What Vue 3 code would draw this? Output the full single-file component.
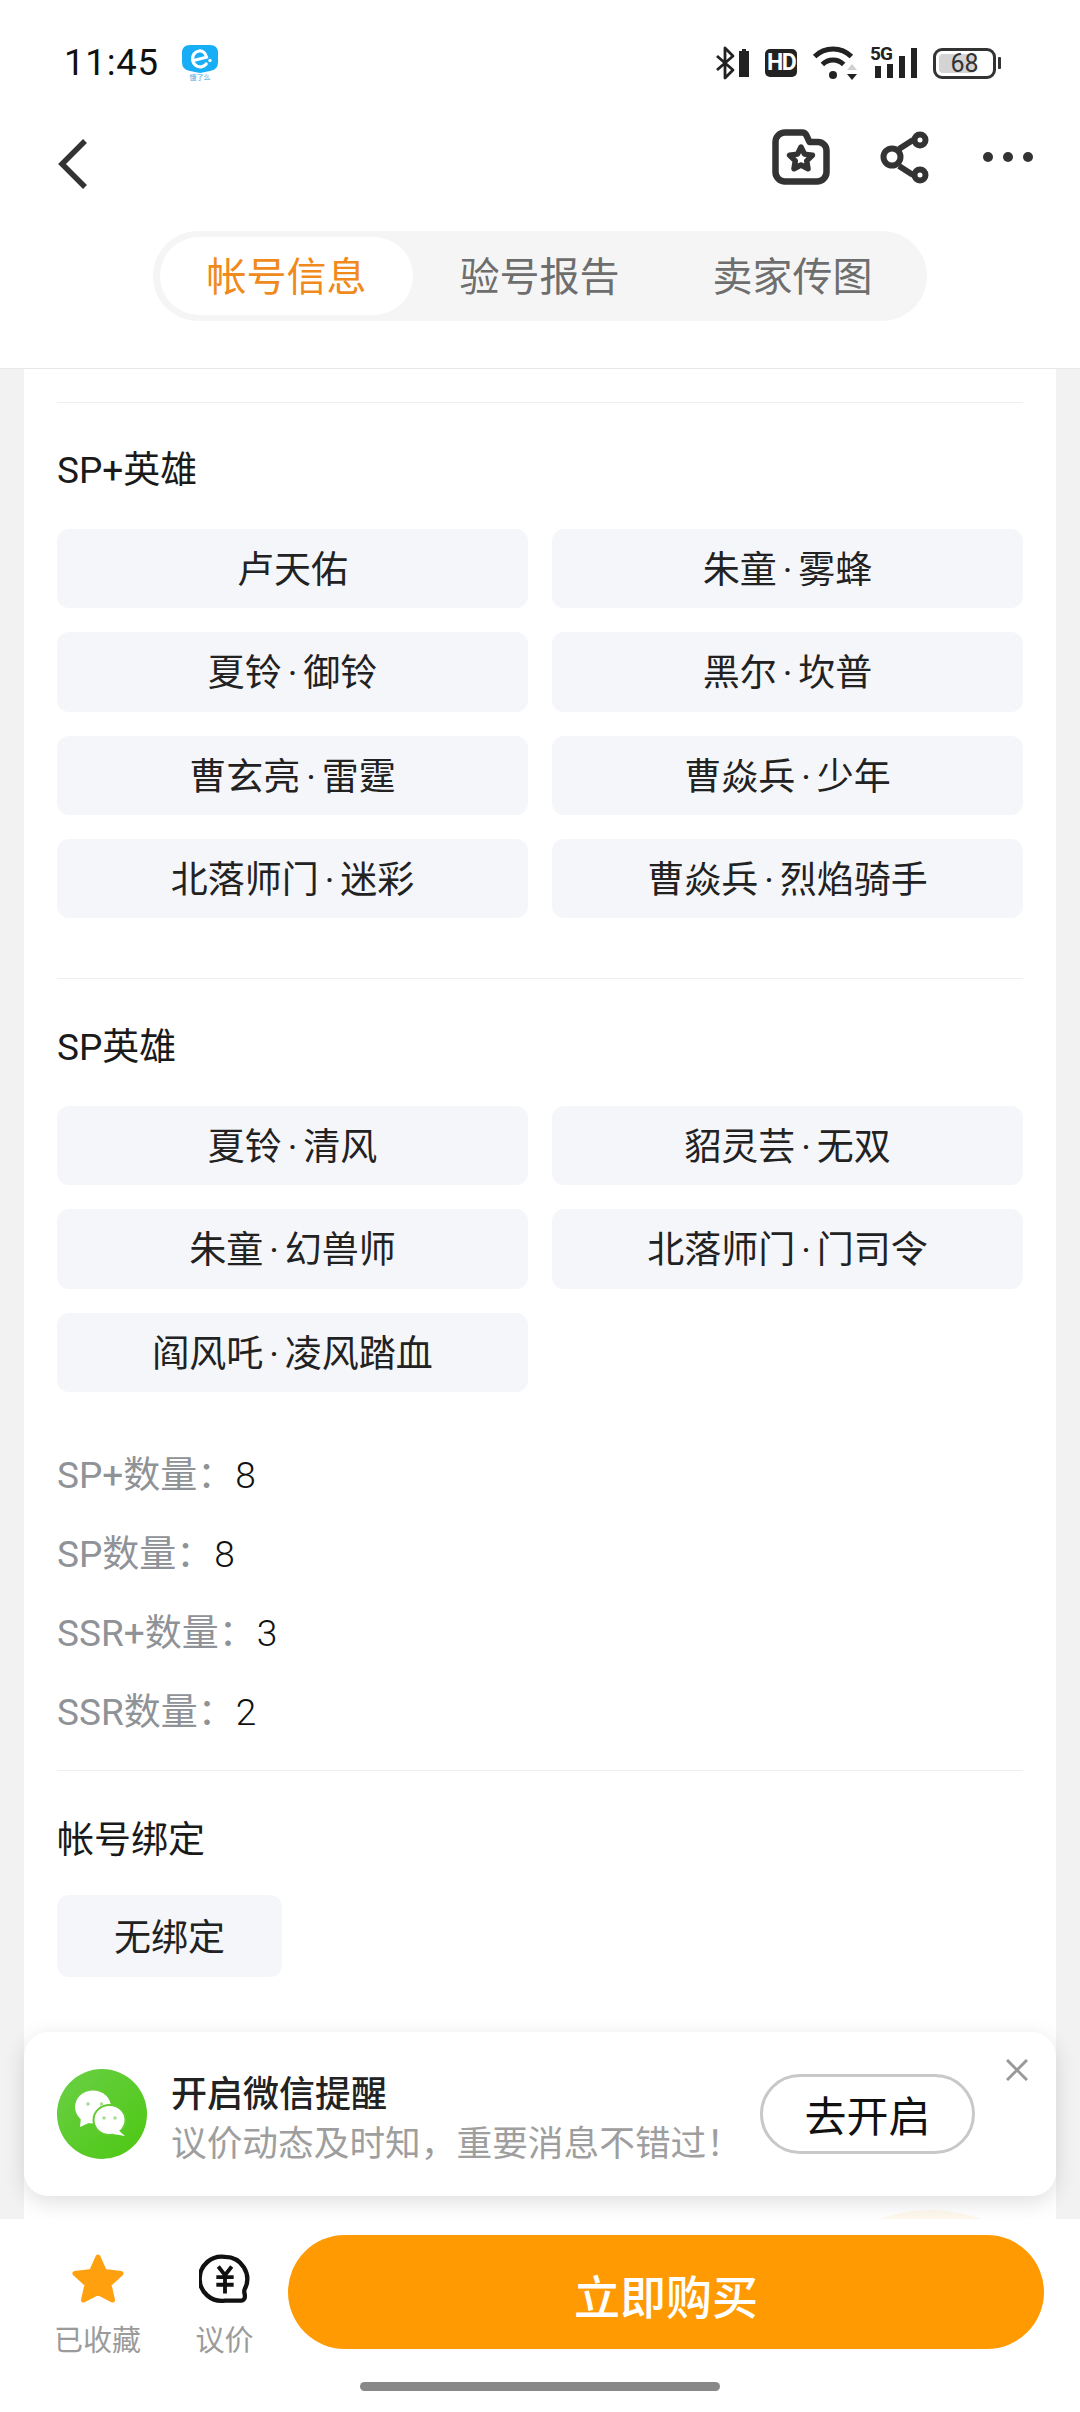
<script setup>
const tabs = ['帐号信息', '验号报告', '卖家传图']
const spPlus = ['卢天佑', '朱童·雾蜂', '夏铃·御铃', '黑尔·坎普', '曹玄亮·雷霆', '曹焱兵·少年', '北落师门·迷彩', '曹焱兵·烈焰骑手']
const sp = ['夏铃·清风', '貂灵芸·无双', '朱童·幻兽师', '北落师门·门司令', '阎风吒·凌风踏血']
const stats = [['SP+数量：', 8], ['SP数量：', 8], ['SSR+数量：', 3], ['SSR数量：', 2]]
</script>

<template>
  <div class="page">
    <header class="top">
      <div class="status">
        <div class="status-left">
          <span class="time">11:45</span>
          <div class="app">
            <svg class="app-logo" width="36" height="28" viewBox="0 0 36 28">
              <path d="M8 0H28Q36 0 36 8V17Q36 25 28 26L18 28L8 26Q0 25 0 17V8Q0 0 8 0Z" fill="#18aef6" />
              <path d="M11.500 15.500L24.500 12.200C23.500 8 20.500 5.500 17 6C12.800 6.600 10 10.500 10.600 15C11.200 19.500 15 22.500 19.500 21.800C21.500 21.500 23 20.500 24.200 19" fill="none" stroke="#fff" stroke-width="3.200" stroke-linecap="round" />
              <circle cx="28" cy="15.500" r="1.700" fill="#fff" />
            </svg>
            <span class="app-name">饿了么</span>
          </div>
        </div>
        <div class="status-right">
          <svg class="bt" width="36" height="34" viewBox="0 0 36 34">
            <path d="M2 10L18 24L10 32V2L18 10L2 24" fill="none" stroke="#222" stroke-width="2.800" stroke-linejoin="round" />
            <path d="M24 5H34V31H24Z" fill="#222" />
            <path d="M27 3H31V5H27Z" fill="#222" />
          </svg>
          <span class="hd">HD</span>
          <svg class="wifi" width="45" height="36" viewBox="0 0 45 36">
            <path d="M1.600 11.600A26 26 0 0 1 38.400 11.600M9.400 19.400A15 15 0 0 1 30.600 19.400" fill="none" stroke="#222" stroke-width="5" />
            <circle cx="20" cy="30" r="4" fill="#222" />
            <path d="M39 19L44 25H34Z" fill="#d0d0d0" />
            <path d="M34 29H44L39 35Z" fill="#222" />
          </svg>
          <div class="signal">
            <span class="five">5G</span>
            <svg width="46" height="32" viewBox="0 0 46 32">
              <path d="M4 19H10V31H4ZM16 17H22V31H16ZM28 9H34V31H28ZM40 1H46V31H40Z" fill="#222" />
            </svg>
          </div>
          <div class="battery">
            <div class="battery-body">
              <div class="battery-fill"></div>
              <span class="battery-num">68</span>
            </div>
            <div class="battery-tip"></div>
          </div>
        </div>
      </div>

      <nav class="nav">
        <svg class="back" width="32" height="52" viewBox="0 0 32 52">
          <path d="M27 3L4 26L27 49" fill="none" stroke="#333" stroke-width="5.500" />
        </svg>
        <div class="nav-actions">
          <svg width="58" height="56" viewBox="0 0 58 56">
            <path d="M3.500 13a9.500 9.500 0 0 1 9.500-9.500H30a5 5 0 0 1 4.500 3L37.500 13H46a8.500 8.500 0 0 1 8.500 8.500V43a9.500 9.500 0 0 1-9.500 9.500H13A9.500 9.500 0 0 1 3.500 43Z" fill="none" stroke="#333" stroke-width="6.500" stroke-linejoin="round" />
            <path d="M29 18L32.500 25.100L40.400 26.300L34.700 31.900L36 39.700L29 36L22 39.700L23.300 31.900L17.600 26.300L25.500 25.100Z" fill="#fff" stroke="#333" stroke-width="5.500" stroke-linejoin="round" />
          </svg>
          <svg class="share" width="52" height="54" viewBox="0 0 52 54">
            <path d="M19 18L33 9M19 35L33 44" stroke="#333" stroke-width="6" />
            <circle cx="12" cy="26" r="8.500" fill="none" stroke="#333" stroke-width="6" />
            <circle cx="40" cy="9" r="5.500" fill="none" stroke="#333" stroke-width="6" />
            <circle cx="40" cy="44" r="5.500" fill="none" stroke="#333" stroke-width="6" />
          </svg>
          <div class="dots"><i></i><i></i><i></i></div>
        </div>
      </nav>

      <div class="tabs">
        <div v-for="(tab, i) in tabs" :key="tab" class="tab" :class="{ active: i === 0 }">{{ tab }}</div>
      </div>
    </header>

    <main class="main">
      <section class="card">
        <div class="group first">
          <h2 class="title">SP+英雄</h2>
          <div class="chips">
            <div v-for="name in spPlus" :key="name" class="chip">
              <template v-for="(part, i) in name.split('·')" :key="part"><span v-if="i" class="dot">·</span>{{ part }}</template>
            </div>
          </div>
        </div>
        <div class="group second">
          <h2 class="title">SP英雄</h2>
          <div class="chips">
            <div v-for="name in sp" :key="name" class="chip">
              <template v-for="(part, i) in name.split('·')" :key="part"><span v-if="i" class="dot">·</span>{{ part }}</template>
            </div>
          </div>
          <div class="stats">
            <div v-for="row in stats" :key="row[0]" class="stat">
              <span class="stat-label">{{ row[0] }}</span><span class="stat-value">{{ row[1] }}</span>
            </div>
          </div>
        </div>
        <div class="group bind">
          <h2 class="title">帐号绑定</h2>
          <div class="chip small">无绑定</div>
        </div>
      </section>

      <div class="glow"></div>

      <aside class="notice">
        <svg class="wx" width="90" height="90" viewBox="0 0 90 90">
          <defs>
            <linearGradient id="wxg" x1="0" y1="0" x2="1" y2="1">
              <stop offset="0" stop-color="#6ad046" />
              <stop offset="1" stop-color="#4dc712" />
            </linearGradient>
          </defs>
          <circle cx="45" cy="45" r="45" fill="url(#wxg)" />
          <ellipse cx="36" cy="38" rx="18" ry="16.500" fill="#fff" />
          <path d="M24 48L23 58L34 53Z" fill="#fff" />
          <ellipse cx="52.500" cy="51" rx="16" ry="15" fill="#fff" stroke="#5fcc30" stroke-width="2" />
          <path d="M60 60L68 67L56 65Z" fill="#fff" />
          <circle cx="31" cy="35" r="1.800" fill="#a8dc94" />
          <circle cx="44.500" cy="35" r="1.800" fill="#a8dc94" />
          <circle cx="47" cy="49" r="1.800" fill="#a8dc94" />
          <circle cx="58" cy="49" r="1.800" fill="#a8dc94" />
        </svg>
        <div class="notice-text">
          <div class="notice-title">开启微信提醒</div>
          <div class="notice-sub">议价动态及时知，重要消息不错过！</div>
        </div>
        <div class="notice-btn">去开启</div>
        <svg class="close" width="22" height="22" viewBox="0 0 22 22">
          <path d="M1 1L21 21M21 1L1 21" stroke="#999" stroke-width="3" />
        </svg>
      </aside>
    </main>

    <footer class="bottom">
      <div class="actions">
        <div class="action">
          <svg width="52" height="50" viewBox="0 0 52 50">
            <path d="M26 3L32.500 17.500L49 19.500L37 30.500L40.500 46L26 38.500L11.500 46L15 30.500L3 19.500L19.500 17.500Z" fill="#ffa00f" stroke="#ffa00f" stroke-width="5" stroke-linejoin="round" />
          </svg>
          <span class="action-label">已收藏</span>
        </div>
        <div class="action">
          <svg width="52" height="50" viewBox="0 0 52 52">
            <path d="M26 3A23 23 0 0 1 46.500 36.500Q45.500 38 46.500 42Q47.500 48 43 48.500H26A23 23 0 1 1 26 3Z" fill="none" stroke="#111" stroke-width="4.500" stroke-linejoin="round" />
            <path d="M19 13L26 22L33 13M17 24H35M17 32H35M26 22V41" fill="none" stroke="#111" stroke-width="4" />
          </svg>
          <span class="action-label">议价</span>
        </div>
        <div class="buy">立即购买</div>
      </div>
      <div class="home"></div>
    </footer>
  </div>
</template>

<style scoped>
.page {
  width: 1080px;
  height: 2412px;
  display: flex;
  flex-direction: column;
  overflow: hidden;
  background: #fff;
  font-family: "Noto Sans CJK SC", "Noto Sans", sans-serif;
  color: #222;
}
.top {
  height: 369px;
  box-sizing: border-box;
  border-bottom: 1px solid #e8e8e8;
  flex: none;
}
.status {
  height: 126px;
  padding: 0 79px 0 64px;
  box-sizing: border-box;
  display: flex;
  justify-content: space-between;
  align-items: center;
}
.status-left { display: flex; align-items: center; gap: 23px; }
.time { font: 400 36.500px/1 Roboto, sans-serif; color: #111; letter-spacing: 0.800px; }
.app { width: 36px; height: 36px; display: flex; flex-direction: column; align-items: center; }
.app-logo { display: block; flex: none; }
.app-name { font-size: 7px; line-height: 8px; color: #3aa6e0; white-space: nowrap; }
.status-right { display: flex; align-items: center; }
.bt { display: block; margin-right: 14px; }
.hd {
  width: 32px;
  height: 28px;
  margin-right: 16px;
  background: #222;
  border-radius: 5px;
  color: #fff;
  font: 700 23px/28px Roboto, sans-serif;
  letter-spacing: -1.500px;
  text-align: center;
}
.wifi { display: block; margin-right: 13px; }
.signal { position: relative; width: 46px; height: 32px; margin-right: 16px; }
.signal svg { display: block; }
.five {
  position: absolute;
  left: -1px;
  top: -1px;
  font: 700 19px/16px Roboto, sans-serif;
  letter-spacing: -0.800px;
  color: #222;
}
.battery { display: flex; align-items: center; gap: 2px; }
.battery-body {
  position: relative;
  width: 63px;
  height: 31px;
  box-sizing: border-box;
  border: 3px solid #333;
  border-radius: 9px;
  display: flex;
  align-items: center;
  justify-content: center;
}
.battery-fill { position: absolute; left: 3px; top: 3px; bottom: 3px; width: 36px; background: #d4d4d4; border-radius: 4px; }
.battery-num { position: relative; font: 400 25px/1 Roboto, sans-serif; color: #333; }
.battery-tip { width: 3px; height: 12px; background: #333; border-radius: 1px; }
.nav {
  height: 105px;
  box-sizing: border-box;
  padding: 3px 47px 0 58px;
  display: flex;
  justify-content: space-between;
  align-items: flex-start;
}
.back { display: block; margin-top: 9px; }
.nav-actions { display: flex; align-items: flex-start; }
.share { display: block; margin: 2px 0 0 50px; }
.dots { display: flex; gap: 10px; margin: 23px 0 0 51px; }
.dots i { width: 10px; height: 10px; border-radius: 50%; background: #333; }
.tabs {
  width: 774px;
  height: 90px;
  margin-left: 153px;
  box-sizing: border-box;
  padding: 6px 7px;
  background: #f5f5f5;
  border-radius: 45px;
  display: flex;
}
.tab {
  width: 253px;
  height: 78px;
  border-radius: 39px;
  text-align: center;
  font-size: 40px;
  line-height: 75px;
  color: #6e6e6e;
}
.tab.active { background: #fff; color: #f08a1c; }
.main {
  position: relative;
  flex: 1;
  min-height: 0;
  overflow: hidden;
  padding: 0 24px;
  background: #f2f2f2;
}
.card {
  height: 100%;
  box-sizing: border-box;
  padding: 33px 33px 0;
  background: #fff;
}
.group { border-top: 1px solid #eee; }
.first { padding: 40px 0 60px; }
.second { padding: 41px 0 18px; }
.bind { padding-top: 42px; }
.title {
  margin: 0 0 34px;
  padding-top: 4px;
  font-family: Roboto, "Noto Sans CJK SC", sans-serif;
  font-size: 37px;
  font-weight: 400;
  line-height: 48px;
  color: #1a1a1a;
}
.bind .title { margin-bottom: 30px; }
.chips { display: grid; grid-template-columns: 471px 471px; gap: 24px; }
.chip {
  height: 79.300px;
  border-radius: 12px;
  background: #f5f6fa;
  text-align: center;
  font-size: 37px;
  line-height: 77px;
  color: #222;
}
.dot { font-family: Roboto, sans-serif; padding: 0 6px; }
.chip.small { width: 225px; height: 82px; line-height: 80px; }
.stats { padding-top: 44px; }
.stat { height: 79px; line-height: 79px; font-size: 37px; font-family: Roboto, "Noto Sans CJK SC", sans-serif; }
.stat-label { color: #8f9296; font-weight: 400; }
.stat-value { color: #111; margin-left: 1px; font-weight: 300; }
.glow {
  position: absolute;
  left: 780px;
  bottom: -291px;
  width: 300px;
  height: 300px;
  border-radius: 50%;
  background: #fff8ec;
}
.notice {
  position: absolute;
  left: 24px;
  right: 24px;
  bottom: 23px;
  height: 164px;
  box-sizing: border-box;
  padding-left: 33px;
  background: #fff;
  border-radius: 24px;
  box-shadow: 0 6px 22px rgba(0, 0, 0, 0.13);
  display: flex;
  align-items: center;
}
.wx { display: block; flex: none; }
.notice-text { margin: 4px 0 0 24px; width: 589px; flex: none; }
.notice-title { font-size: 36px; line-height: 49px; color: #222; font-weight: 500; }
.notice-sub { font-size: 35.700px; line-height: 49px; color: #9e9e9e; white-space: nowrap; }
.notice-btn {
  width: 215px;
  height: 80px;
  box-sizing: border-box;
  border: 3px solid #c8c8c8;
  border-radius: 40px;
  text-align: center;
  font-size: 42px;
  line-height: 73px;
  color: #111;
  flex: none;
}
.close { position: absolute; right: 28px; top: 27px; }
.bottom {
  flex: none;
  height: 193px;
  box-sizing: border-box;
  padding-top: 16px;
  background: #fff;
  position: relative;
}
.actions { display: flex; height: 114px; padding-left: 34px; }
.action { width: 127px; box-sizing: border-box; padding-top: 19px; display: flex; flex-direction: column; align-items: center; }
.action svg { display: block; flex: none; }
.action-label { margin-top: 14px; font-size: 29px; line-height: 40px; color: #9b9b9b; white-space: nowrap; }
.buy {
  width: 756px;
  height: 114px;
  border-radius: 57px;
  background: #ff9a03;
  text-align: center;
  color: #fff;
  font-size: 46px;
  font-weight: 500;
  line-height: 118px;
}
.home { width: 360px; height: 9px; margin: 33px auto 0; border-radius: 5px; background: #888; }
</style>
